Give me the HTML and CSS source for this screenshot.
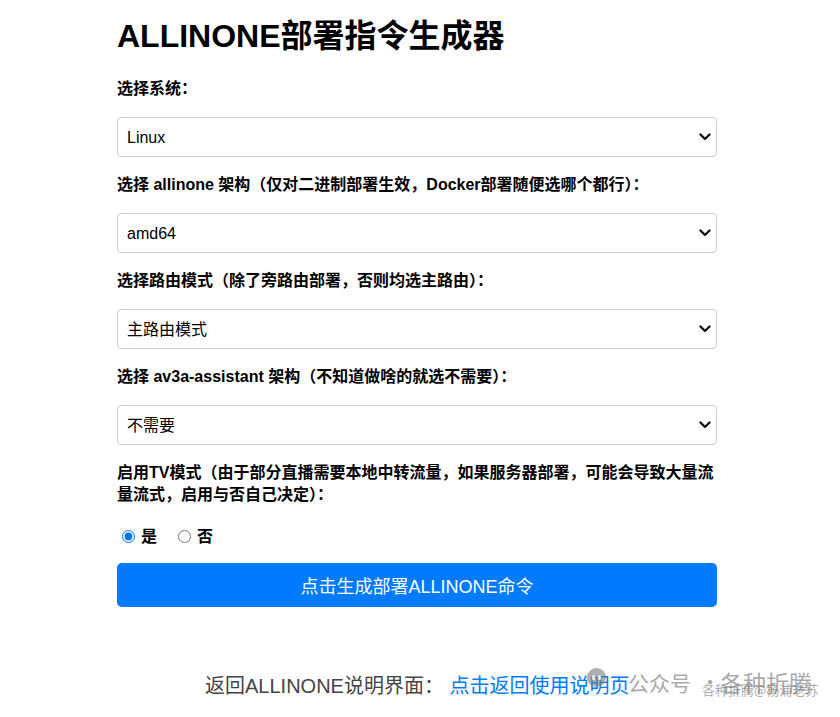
FILE: index.html
```html
<!DOCTYPE html>
<html lang="zh-CN">
<head>
<meta charset="utf-8">
<title>ALLINONE部署指令生成器</title>
<link rel="stylesheet" href="styles.css">
</head>
<body>
<div class="container">
  <h1 class="title">ALLINONE部署指令生成器</h1>

  <label class="field-label">选择系统：</label>
  <div class="select-wrap">
    <select class="select"><option>Linux</option></select>
    <svg class="chev" width="12" height="8" viewBox="0 0 12 8"><path d="M1.5 1.5 L6 6 L10.5 1.5" fill="none" stroke="#111" stroke-width="2.4" stroke-linecap="round" stroke-linejoin="round"/></svg>
  </div>

  <label class="field-label">选择 allinone 架构（仅对二进制部署生效，Docker部署随便选哪个都行）：</label>
  <div class="select-wrap">
    <select class="select"><option>amd64</option></select>
    <svg class="chev" width="12" height="8" viewBox="0 0 12 8"><path d="M1.5 1.5 L6 6 L10.5 1.5" fill="none" stroke="#111" stroke-width="2.4" stroke-linecap="round" stroke-linejoin="round"/></svg>
  </div>

  <label class="field-label">选择路由模式（除了旁路由部署，否则均选主路由）：</label>
  <div class="select-wrap">
    <select class="select"><option>主路由模式</option></select>
    <svg class="chev" width="12" height="8" viewBox="0 0 12 8"><path d="M1.5 1.5 L6 6 L10.5 1.5" fill="none" stroke="#111" stroke-width="2.4" stroke-linecap="round" stroke-linejoin="round"/></svg>
  </div>

  <label class="field-label">选择 av3a-assistant 架构（不知道做啥的就选不需要）：</label>
  <div class="select-wrap">
    <select class="select"><option>不需要</option></select>
    <svg class="chev" width="12" height="8" viewBox="0 0 12 8"><path d="M1.5 1.5 L6 6 L10.5 1.5" fill="none" stroke="#111" stroke-width="2.4" stroke-linecap="round" stroke-linejoin="round"/></svg>
  </div>

  <label class="field-label">启用TV模式（由于部分直播需要本地中转流量，如果服务器部署，可能会导致大量流量流式，启用与否自己决定）：</label>
  <div class="radios">
    <label class="radio-item"><input type="radio" name="tv" checked> 是</label>
    <label class="radio-item"><input type="radio" name="tv"> 否</label>
  </div>

  <button class="btn">点击生成部署ALLINONE命令</button>
</div>

<p class="footer">返回ALLINONE说明界面： <a class="link" href="#">点击返回使用说明页</a></p>

<div class="watermark">
  <span class="wm-icon"><span class="wm-eye"></span><span class="wm-eye"></span></span>
  <span class="wm-a">公众号</span>
  <span class="wm-dot">·</span>
  <span class="wm-b">各种折腾</span>
  <span class="wm-sub">各种折腾@杨浦老苏</span>
</div>
</body>
</html>
```

FILE: styles.css
```css
html, body {
  margin: 0;
  padding: 0;
  background: #fff;
}
body {
  font-family: "Liberation Sans", Arial, "Noto Sans CJK SC", sans-serif;
  color: #000;
  font-size: 16px;
}
.container {
  width: 600px;
  margin: 0 0 0 117px;
  padding-top: 17px;
}
.title {
  font-size: 32px;
  line-height: 38px;
  font-weight: bold;
  margin: 0 0 23px 0;
}
.field-label {
  display: block;
  font-weight: bold;
  font-size: 16px;
  line-height: 22px;
  margin-bottom: 17px;
}
.select-wrap {
  position: relative;
  margin-bottom: 17px;
}
.select {
  display: block;
  width: 100%;
  height: 40px;
  box-sizing: border-box;
  -webkit-appearance: none;
  appearance: none;
  background: #fff;
  border: 1px solid #ccc;
  border-radius: 4px;
  padding: 0 9px;
  font-family: "Liberation Sans", Arial, "Noto Sans CJK SC", sans-serif;
  font-size: 16px;
  color: #000;
}
.chev {
  position: absolute;
  right: 6px;
  top: 16px;
  pointer-events: none;
}
.radios {
  display: flex;
  align-items: center;
  height: 24px;
  margin-bottom: 16px;
  font-size: 16px;
  font-weight: bold;
}
.radio-item {
  display: flex;
  align-items: center;
  margin-right: 16px;
}
.radio-item input {
  margin: 2px 6px 0 5px;
  width: 13px;
  height: 13px;
  accent-color: #0075ff;
}
.btn {
  display: block;
  width: 100%;
  height: 44px;
  border: none;
  border-radius: 5px;
  background: #007bff;
  color: #fff;
  font-family: "Liberation Sans", Arial, "Noto Sans CJK SC", sans-serif;
  font-size: 18px;
  cursor: pointer;
}
.footer {
  margin: 66px 0 0 0;
  padding-left: 205px;
  font-size: 20px;
  line-height: 26px;
  color: #444;
  white-space: nowrap;
}
.link {
  color: #007bff;
  text-decoration: none;
}
.watermark {
  position: absolute;
  left: 586px;
  top: 668px;
  width: 250px;
  height: 40px;
  pointer-events: none;
  font-family: "Noto Sans CJK SC", sans-serif;
  white-space: nowrap;
}
.wm-icon {
  position: absolute;
  left: 1px;
  top: 0;
  width: 19px;
  height: 19px;
  border-radius: 50%;
  background: rgba(120,120,120,0.6);
  display: flex;
  justify-content: center;
  align-items: center;
  gap: 3px;
}
.wm-eye {
  width: 3px;
  height: 5px;
  border-radius: 2px;
  background: rgba(255,255,255,0.8);
}
.wm-a {
  position: absolute;
  left: 42px;
  top: 0;
  font-size: 21px;
  line-height: 28px;
  color: rgba(130,130,130,0.7);
}
.wm-dot {
  position: absolute;
  left: 114px;
  top: 0;
  font-size: 20px;
  line-height: 28px;
  color: rgba(130,130,130,0.7);
}
.wm-b {
  position: absolute;
  left: 134px;
  top: 0;
  font-size: 23px;
  line-height: 28px;
  color: rgba(130,130,130,0.7);
}
.wm-sub {
  position: absolute;
  left: 116px;
  top: 12px;
  font-size: 13px;
  line-height: 20px;
  color: rgba(110,110,110,0.6);
}
```
